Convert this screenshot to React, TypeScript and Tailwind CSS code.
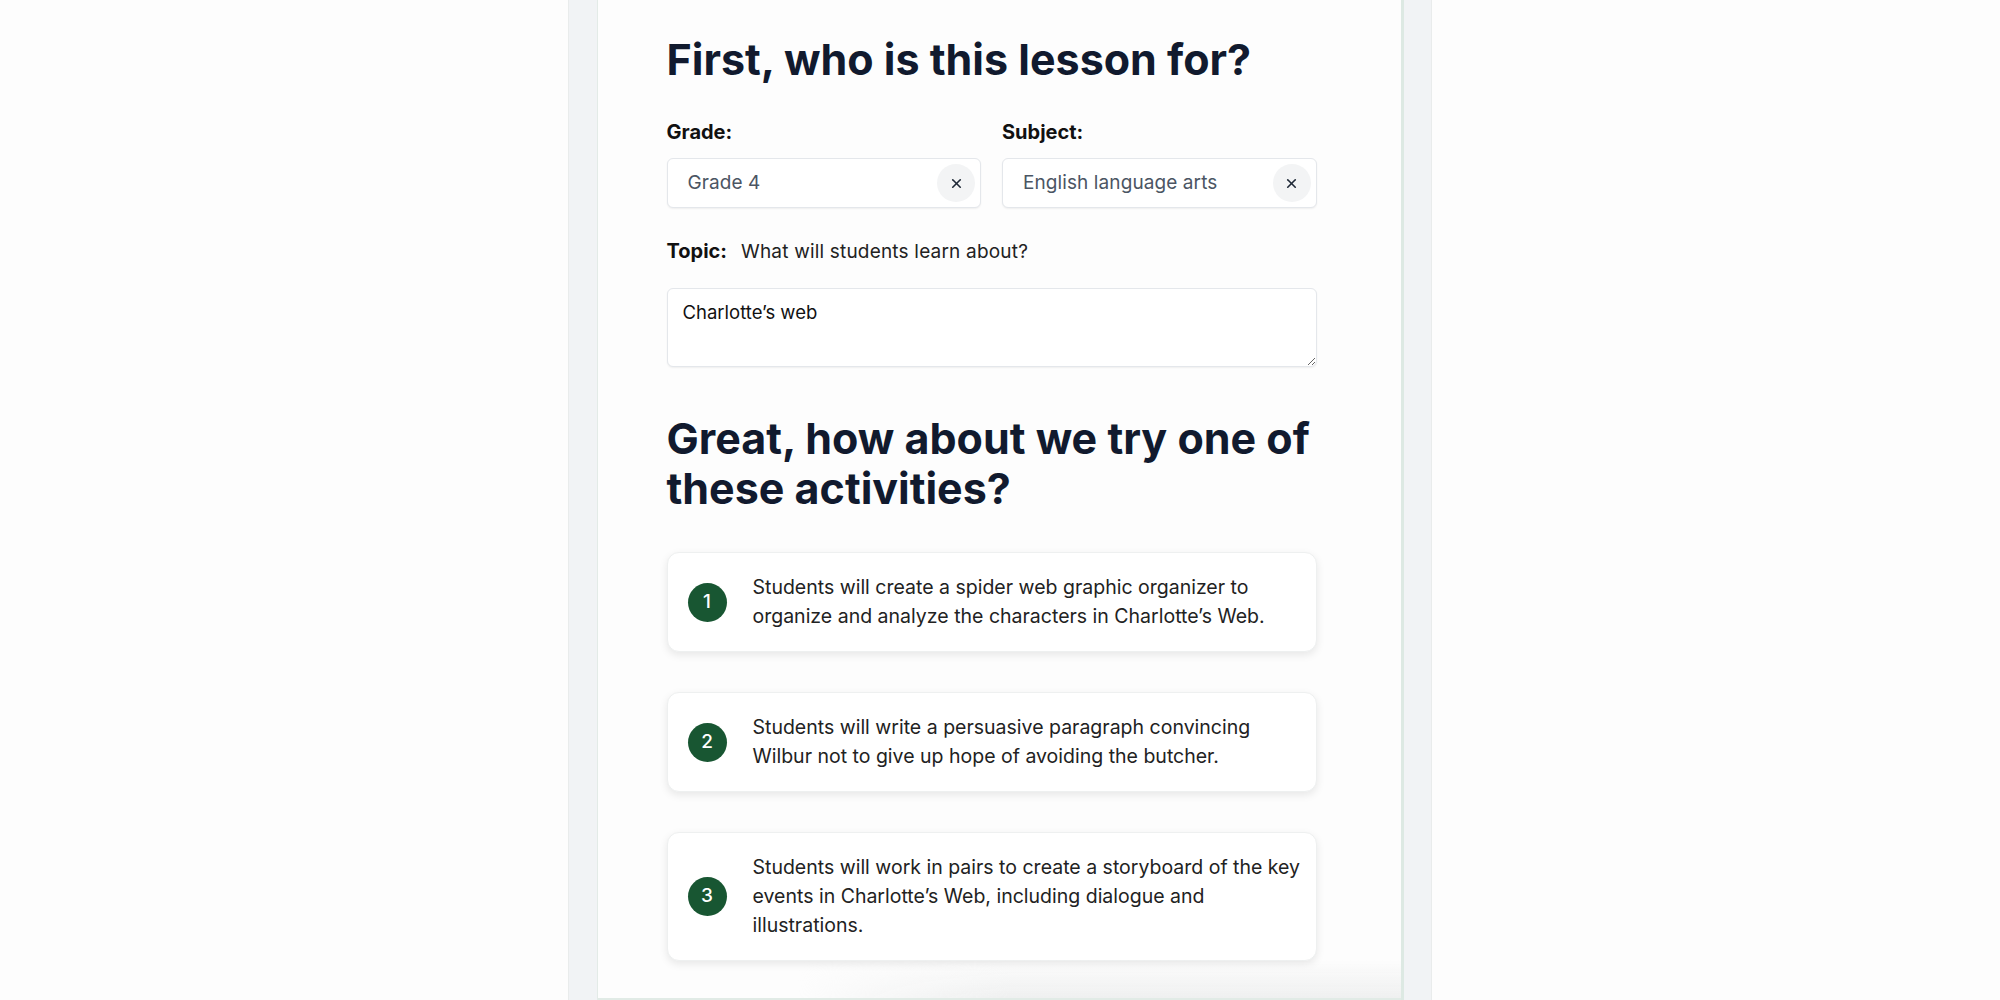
import { X } from 'lucide-react';

const activities = [
  'Students will create a spider web graphic organizer to organize and analyze the characters in Charlotte\u2019s Web.',
  'Students will write a persuasive paragraph convincing Wilbur not to give up hope of avoiding the butcher.',
  'Students will work in pairs to create a storyboard of the key events in Charlotte\u2019s Web, including dialogue and illustrations.',
];

function SelectBox({ value }: { value: string }) {
  return (
    <div className="flex h-[50px] items-center justify-between rounded-md border border-[#e4e7eb] bg-white pl-5 pr-[5px] shadow-[0_1px_2px_rgba(0,0,0,0.06)]">
      <span className="text-[19px] tracking-[0.005em] text-[#4b5563]">{value}</span>
      <button
        type="button"
        className="flex h-[38px] w-[38px] items-center justify-center rounded-full bg-[#f3f4f5] text-[#1f2937]"
      >
        <X size={15} strokeWidth={2.6} />
      </button>
    </div>
  );
}

export default function App() {
  return (
    <div
      className="flex h-screen justify-center overflow-hidden bg-[#fdfdfd]"
      style={{ fontFamily: 'Inter, "Noto Sans", sans-serif' }}
    >
      {/* Gray column */}
      <div className="flex h-full w-[864px] justify-center border-x border-[#e9ecec] bg-[#f1f3f5]">
        {/* Card */}
        <div className="relative h-full w-[807px] border-l border-r-[3px] border-l-[#e3ebe7] border-r-[#dde9e3] bg-[#fdfdfd] pl-[69px] pr-[84px] pt-[34px]">
          <h1 className="text-[43px] font-bold leading-[50px] text-[#111a2e]">
            First, who is this lesson for?
          </h1>

          <div className="mt-[36px] grid grid-cols-2 gap-x-[21px]">
            <div>
              <div className="text-[20px] font-bold leading-[24px] text-[#111]">Grade:</div>
              <div className="mt-[14px]">
                <SelectBox value="Grade 4" />
              </div>
            </div>
            <div>
              <div className="text-[20px] font-bold leading-[24px] text-[#111]">Subject:</div>
              <div className="mt-[14px]">
                <SelectBox value="English language arts" />
              </div>
            </div>
          </div>

          <div className="mt-[31px] flex items-baseline gap-[14px] leading-[24px]">
            <span className="text-[20px] font-bold text-[#111]">Topic:</span>
            <span className="text-[19px] tracking-[0.01em] text-[#222]">What will students learn about?</span>
          </div>

          <textarea
            defaultValue={'Charlotte\u2019s web'}
            className="mt-[24px] block h-[79px] w-full rounded-md border border-[#e4e7eb] bg-white px-[15px] py-[11px] text-[18.5px] leading-[24px] text-[#111] shadow-[0_1px_2px_rgba(0,0,0,0.06)] outline-none"
          />

          <h2 className="mt-[46px] text-[43px] font-bold leading-[50px] text-[#111a2e]">
            Great, how about we try one of these activities?
          </h2>

          <div className="mt-[39px] flex flex-col gap-[40px]">
            {activities.map((text, i) => (
              <div
                key={i}
                className="flex items-center gap-[26px] rounded-xl border border-[#eef0f0] bg-white py-5 pl-5 pr-3 shadow-[0_3px_8px_rgba(0,0,0,0.09)]"
              >
                <div className="flex h-[39px] w-[39px] shrink-0 items-center justify-center rounded-full bg-[#185632] text-[19px] font-medium text-white">
                  {i + 1}
                </div>
                <p className="text-[19.5px] leading-[29px] text-[#222]">{text}</p>
              </div>
            ))}
          </div>

          {/* Footer shadow peeking in at the bottom */}
          <div className="absolute bottom-0 left-[200px] right-0 h-[40px] bg-[linear-gradient(to_bottom,rgba(240,241,241,0),#eeefef)] [mask-image:linear-gradient(to_right,transparent,black_35%)]" />
          <div className="absolute bottom-0 left-0 right-0 h-[2px] bg-[#e1ebe6]" />
        </div>
      </div>
    </div>
  );
}
